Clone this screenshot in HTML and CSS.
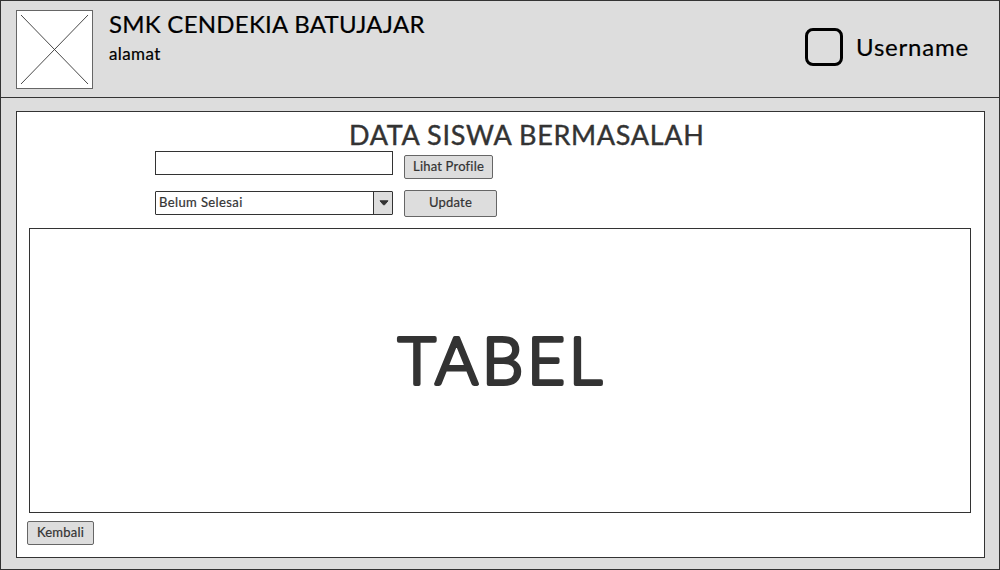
FILE: index.html
```html
<!DOCTYPE html>
<html lang="id">
<head>
<meta charset="utf-8">
<title>Data Siswa Bermasalah</title>
<link rel="stylesheet" href="styles.css">
</head>
<body>
<div class="window">
  <header class="header">
    <svg class="logo" viewBox="0 0 77 79" width="77" height="79">
      <rect x=".5" y=".5" width="76" height="78" fill="#fff" stroke="#666"/>
      <path d="M5 5L72 74M72 5L5 74" stroke="#333" stroke-width=".9"/>
    </svg>
    <div class="school">
      <h1 class="school-name">SMK CENDEKIA BATUJAJAR</h1>
      <p class="address">alamat</p>
    </div>
    <div class="user">
      <span class="avatar"></span>
      <span class="username">Username</span>
    </div>
  </header>
  <main class="panel">
    <h2 class="title">DATA SISWA BERMASALAH</h2>
    <div class="row row-search">
      <div class="field"></div>
      <button class="btn btn-profile">Lihat Profile</button>
    </div>
    <div class="row row-status">
      <div class="field select">
        <span class="value">Belum Selesai</span>
        <span class="arrow"><svg width="10" height="6" viewBox="0 0 10 6"><path d="M1 .8H9L5.6 4.8H4.4Z" fill="#333" stroke="#333" stroke-linejoin="round"/></svg></span>
      </div>
      <button class="btn btn-update">Update</button>
    </div>
    <div class="table"><svg class="table-label" width="240" height="120" viewBox="0 0 240 120"><text x="120" y="81" text-anchor="middle" textLength="204">TABEL</text></svg></div>
    <button class="btn btn-back">Kembali</button>
  </main>
</div>
</body>
</html>
```
FILE: styles.css
```css
* { box-sizing: border-box; }
body { margin: 0; font-family: Lato, "Liberation Sans", sans-serif; color: #333; }
h1, h2, p { margin: 0; font-weight: 400; white-space: nowrap; }
.window { width: 1000px; height: 570px; border: 1px solid #333; background: #ddd; }
.header { height: 97px; border-bottom: 1px solid #333; padding: 9px 30px 0 15px; display: flex; color: #000; }
.logo { display: block; flex: none; }
.school { padding-left: 16px; }
.school-name { font-size: 24px; line-height: 28px; letter-spacing: .25px; -webkit-text-stroke: .2px #000; }
.address { font-size: 17px; line-height: 20px; margin-top: 6px; letter-spacing: .4px; -webkit-text-stroke: .2px #000; }
.user { margin-left: auto; height: 38px; margin-top: 18px; width: 164px; display: flex; align-items: center; gap: 13px; }
.avatar { width: 38px; height: 38px; border: 3px solid #000; border-radius: 8px; flex: none; }
.username { font-size: 24px; line-height: 30px; letter-spacing: .8px; -webkit-text-stroke: .2px #000; }
.panel { width: 969px; height: 447px; margin: 13px 0 0 15px; border: 1px solid #333; background: #fff; }
.title { height: 39px; padding-left: 332px; font-size: 27px; line-height: 46px; letter-spacing: .68px; -webkit-text-stroke: .4px #333; }
.row { display: flex; align-items: flex-start; padding-left: 138px; gap: 11px; }
.row-search { height: 39px; }
.row-status { height: 27px; }
.field { width: 238px; height: 24px; border: 1px solid #333; background: #fff; }
.select { display: flex; margin-top: 1px; border-radius: 1px; }
.value { flex: 1; padding-left: 3px; font-size: 13px; line-height: 21px; letter-spacing: .4px; -webkit-text-stroke: .2px #333; }
.arrow { width: 19px; border-left: 1px solid #333; background: #ddd; display: flex; align-items: center; justify-content: center; padding-left: 1px; }
.btn { display: block; height: 24px; padding: 0 0 2px; border: 1px solid #666; border-radius: 2px; background: #ddd; color: #333; font: 13px/20px Lato, "Liberation Sans", sans-serif; letter-spacing: .2px; -webkit-text-stroke: .2px #333; }
.btn-profile { width: 89px; margin-top: 4px; }
.btn-update { width: 93px; height: 27px; padding-bottom: 3px; }
.btn-back { width: 67px; margin: 8px 0 0 10px; }
.table { width: 942px; height: 285px; margin: 11px 0 0 12px; border: 1px solid #333; display: flex; align-items: center; justify-content: center; }
.table-label { display: block; margin-bottom: 16px; font-size: 65px; font-weight: 300; fill: #333; stroke: #333; stroke-width: 4px; stroke-linejoin: round; }
```
